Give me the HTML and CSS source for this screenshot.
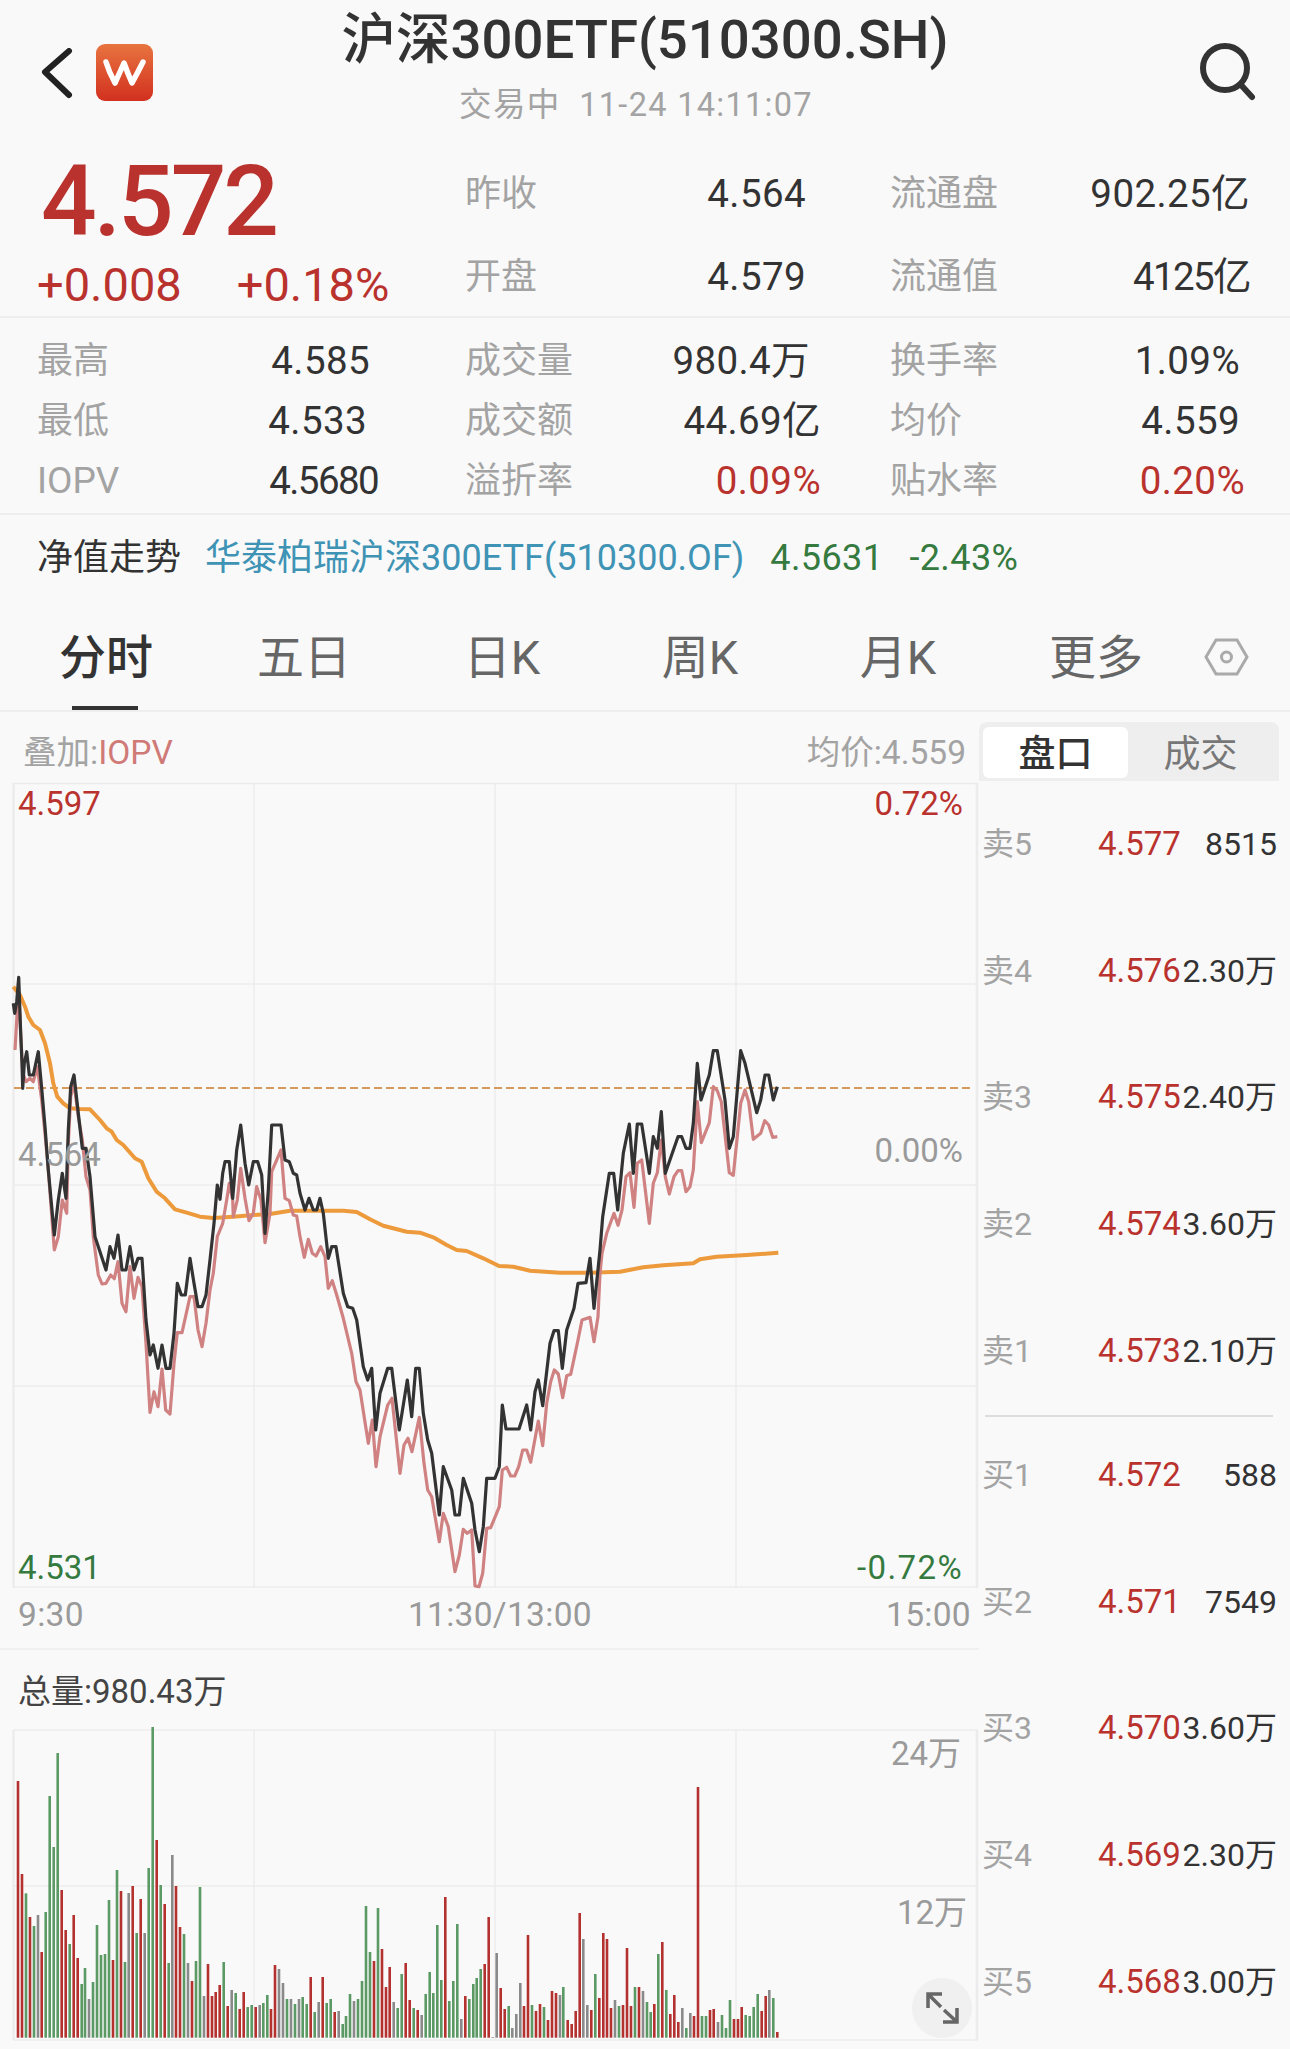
FILE: index.html
```html
<!DOCTYPE html>
<html lang="zh-CN">
<head>
    <meta charset="UTF-8">
    <title>沪深300ETF(510300.SH)</title>
    <link rel="stylesheet" href="styles.css">
</head>
<body>

<div class="header">
    <div class="header-left">
        <svg class="back-icon" width="34" height="52" viewBox="0 0 34 52"><path d="M29 3 L5 24 L29 47" /></svg>
        <svg class="logo" width="58" height="58" viewBox="0 0 58 58">
            <defs>
                <linearGradient id="logoFill" x1="0" y1="0" x2="0" y2="1">
                    <stop offset="0" stop-color="#e8743f" />
                    <stop offset="1" stop-color="#d2301f" />
                </linearGradient>
            </defs>
            <rect width="57" height="57" rx="9" fill="url(#logoFill)" />
            <path d="M10 18 Q13 28 19 39 Q24 28 28 19 Q32 30 36 39 Q42 28 47 18" fill="none" stroke="#fff" stroke-width="5.500" stroke-linecap="round" stroke-linejoin="round" />
        </svg>
    </div>
    <div class="header-center">
        <div class="title">沪深300ETF(510300.SH)</div>
        <div class="subtitle">交易中 &nbsp;11-24 14:11:07</div>
    </div>
    <svg class="search-icon" width="64" height="64" viewBox="0 0 64 64"><circle cx="29" cy="27" r="22" /><path d="M46 45 L56 56" /></svg>
</div>

<div class="quote">
    <div class="price-block">
        <div class="price red">4.572</div>
        <div class="change red"><span>+0.008</span><span>+0.18%</span></div>
    </div>
    <div class="quote-table">
        <div class="cell first"><span class="label">昨收</span><span class="val">4.564</span></div>
        <div class="cell"><span class="label">流通盘</span><span class="val">902.25亿</span></div>
        <div class="cell first"><span class="label">开盘</span><span class="val">4.579</span></div>
        <div class="cell"><span class="label">流通值</span><span class="val tight">4125亿</span></div>
    </div>
</div>

<div class="stats">
    <div class="stat"><span class="label">最高</span><span class="val nudge-8">4.585</span></div>
    <div class="stat"><span class="label">成交量</span><span class="val nudge-11">980.4万</span></div>
    <div class="stat"><span class="label">换手率</span><span class="val nudge-5">1.09%</span></div>
    <div class="stat"><span class="label">最低</span><span class="val nudge-11">4.533</span></div>
    <div class="stat"><span class="label">成交额</span><span class="val">44.69亿</span></div>
    <div class="stat"><span class="label">均价</span><span class="val nudge-5">4.559</span></div>
    <div class="stat"><span class="label latin">IOPV</span><span class="val tight">4.5680</span></div>
    <div class="stat"><span class="label">溢折率</span><span class="val red">0.09%</span></div>
    <div class="stat"><span class="label">贴水率</span><span class="val red">0.20%</span></div>
</div>

<div class="nav-row">
    <span class="nav-title">净值走势</span>
    <span class="nav-link">华泰柏瑞沪深300ETF(510300.OF)</span>
    <span class="green">4.5631</span>
    <span class="green">-2.43%</span>
</div>

<div class="tabs">
    <div class="tab active">分时</div>
    <div class="tab">五日</div>
    <div class="tab">日K</div>
    <div class="tab">周K</div>
    <div class="tab">月K</div>
    <div class="tab">更多</div>
    <svg class="hex-icon" width="46" height="40" viewBox="0 0 46 40"><path d="M2 20 L12 3 L33 3 L43 20 L33 37 L12 37 Z" /><circle cx="22.500" cy="20" r="5" /></svg>
</div>

<div class="main">
    <div class="left">
        <div class="toolbar">
            <span class="overlay">叠加:<span class="pink">IOPV</span></span>
            <span class="avg">均价:4.559</span>
        </div>
        <div class="price-chart">
            <svg id="priceChart" width="979" height="809" viewBox="0 781 979 809"></svg>
            <span class="axis red top-a left-a">4.597</span>
            <span class="axis gray top-b left-a">4.564</span>
            <span class="axis green top-c left-a">4.531</span>
            <span class="axis red top-a right-a">0.72%</span>
            <span class="axis gray top-d right-a">0.00%</span>
            <span class="axis green top-c right-a wide">-0.72%</span>
        </div>
        <div class="time-row">
            <span>9:30</span>
            <span class="time-mid">11:30/13:00</span>
            <span>15:00</span>
        </div>
        <div class="vol-title">总量:980.43万</div>
        <div class="vol-chart">
            <svg id="volChart" width="979" height="329" viewBox="0 1720 979 329"></svg>
            <span class="axis gray vol-top">24万</span>
            <span class="axis gray vol-mid">12万</span>
            <div class="expand">
                <svg width="60" height="60" viewBox="0 0 60 60"><path d="M16 30 L16 16 L30 16 M16 16 L29 29 M32 32 L45 44 M45 30 L45 44 L31 44" /></svg>
            </div>
        </div>
    </div>
    <div class="right">
        <div class="segment">
            <div class="seg-item seg-on">盘口</div>
            <div class="seg-item">成交</div>
        </div>
        <div class="book" id="book"></div>
    </div>
</div>

<script src="chart.js"></script>
</body>
</html>
```

FILE: styles.css
```css
* {
    box-sizing: border-box;
}
html, body {
    margin: 0;
    padding: 0;
}
body {
    width: 1290px;
    height: 2049px;
    overflow: hidden;
    background: #f9f9f9;
    font-family: Roboto, "Noto Sans CJK SC", sans-serif;
    color: #333;
}
.red { color: #b9322d; }
.green { color: #357a3f; }
.gray { color: #9a9a9a; }
.pink { color: #d07a78; }

/* header */
.header {
    height: 125px;
    display: grid;
    grid-template-columns: 300px 1fr 300px;
}
.header-left {
    display: flex;
    align-items: flex-start;
    padding: 44px 0 0 40px;
    gap: 22px;
}
.back-icon {
    margin-top: 4px;
}
.back-icon path {
    fill: none;
    stroke: #222;
    stroke-width: 6;
    stroke-linejoin: round;
    stroke-linecap: round;
}
.header-center {
    text-align: center;
    padding-top: 1px;
    white-space: nowrap;
}
.title {
    font-size: 54.500px;
    font-weight: 500;
    line-height: 76px;
    color: #333;
}
.subtitle {
    margin-top: 6px;
    padding-right: 18px;
    font-size: 32.500px;
    letter-spacing: 1.300px;
    line-height: 44px;
    color: #a3a3a3;
}
.search-icon {
    justify-self: end;
    margin: 41px 30px 0 0;
}
.search-icon circle, .search-icon path {
    fill: none;
    stroke: #333;
    stroke-width: 6;
    stroke-linecap: round;
}

/* quote */
.quote {
    height: 193px;
    display: flex;
    border-bottom: 2px solid #eee;
}
.price-block {
    width: 465px;
    padding: 24px 0 0 37px;
}
.price {
    font-size: 98px;
    font-weight: 500;
    letter-spacing: -3px;
    line-height: 106px;
    padding-left: 4px;
}
.change {
    display: flex;
    gap: 55px;
    font-size: 47px;
    line-height: 60px;
}
.quote-table {
    display: grid;
    grid-template-columns: 425px 360px;
    grid-auto-rows: 83px;
    padding-top: 27px;
}
.cell {
    display: flex;
    justify-content: space-between;
    align-items: center;
}
.cell.first {
    padding-right: 84px;
}
.label {
    font-size: 36px;
    line-height: 40px;
    color: #a3a3a3;
}
.label.latin {
    font-size: 37px;
}
.val {
    font-size: 38.500px;
    letter-spacing: 0.400px;
    line-height: 40px;
    color: #333;
}
.val.red {
    color: #b9322d;
}
.val.tight {
    letter-spacing: -1.600px;
}

/* stats */
.stats {
    height: 197px;
    padding: 13px 0 0 37px;
    display: grid;
    grid-template-columns: 428px 425px 355px;
    grid-auto-rows: 60px;
    border-bottom: 2px solid #eee;
}
.stat {
    display: flex;
    justify-content: space-between;
    align-items: center;
}
.stat:nth-child(3n+1) {
    padding-right: 87px;
}
.stat:nth-child(3n+2) {
    padding-right: 69px;
}
.nudge-5 { margin-right: 5px; }
.nudge-8 { margin-right: 8px; }
.nudge-11 { margin-right: 11px; }

/* net value row */
.nav-row {
    height: 86px;
    display: flex;
    align-items: center;
    padding-left: 37px;
    font-size: 36px;
    line-height: 40px;
    white-space: nowrap;
}
.nav-title {
    color: #333;
    margin-right: 24px;
}
.nav-link {
    color: #3f93b5;
    margin-right: 26px;
}
.nav-row .green {
    margin-right: 26px;
    letter-spacing: 0.400px;
}

/* tabs */
.tabs {
    height: 111px;
    display: grid;
    grid-template-columns: repeat(6, 198px) 1fr;
    padding: 27px 0 0 7px;
    border-bottom: 2px solid #eee;
    position: relative;
}
.tab {
    font-size: 47px;
    line-height: 60px;
    text-align: center;
    color: #666;
}
.tab.active {
    color: #333;
    font-weight: 500;
}
.tab.active::after {
    content: "";
    position: absolute;
    left: 72px;
    bottom: 0;
    width: 66px;
    height: 4px;
    background: #333;
}
.hex-icon {
    margin: 9px 0 0 9px;
}
.hex-icon path, .hex-icon circle {
    fill: none;
    stroke: #aaa;
    stroke-width: 3;
}

/* main */
.main {
    display: flex;
}
.left {
    width: 979px;
}
.right {
    flex: 1;
}
.toolbar {
    height: 69px;
    display: flex;
    justify-content: space-between;
    align-items: center;
    padding: 12px 13px 0 23px;
    font-size: 33.500px;
    line-height: 40px;
    color: #a3a3a3;
}
.price-chart, .vol-chart {
    position: relative;
}
.price-chart svg, .vol-chart svg {
    display: block;
}
.axis {
    position: absolute;
    font-size: 33px;
    line-height: 40px;
}
.axis.wide {
    letter-spacing: 1.400px;
}
.left-a { left: 18px; }
.right-a { right: 16px; }
.top-a { top: 3px; }
.top-b { top: 354px; }
.top-c { top: 767px; }
.top-d { top: 350px; }
.time-row {
    height: 60px;
    display: flex;
    justify-content: space-between;
    align-items: center;
    padding: 0 8px 8px 18px;
    font-size: 33.500px;
    letter-spacing: 0.300px;
    line-height: 40px;
    color: #9a9a9a;
    border-bottom: 2px solid #f0f0f0;
}
.time-mid {
    margin-left: 30px;
}
.vol-title {
    height: 70px;
    padding-left: 18px;
    font-size: 33px;
    line-height: 84px;
    color: #444;
}
.vol-top { top: 14px; right: 18px; }
.vol-mid { top: 173px; right: 12px; }
.expand {
    position: absolute;
    left: 912px;
    top: 258px;
    width: 60px;
    height: 60px;
    border-radius: 50%;
    background: #f0f0f0;
}
.expand path {
    fill: none;
    stroke: #666;
    stroke-width: 3.500;
}

/* order book */
.segment {
    height: 59px;
    margin: 10px 12px 0 0;
    padding: 5px 6px 3px 4px;
    background: #eee;
    border-radius: 8px 8px 0 0;
    display: flex;
}
.seg-item {
    width: 145px;
    font-size: 37px;
    line-height: 55px;
    text-align: center;
    color: #777;
}
.seg-on {
    height: 51px;
    background: #fff;
    border-radius: 6px;
    color: #333;
    font-weight: 500;
}
.book-row {
    height: 126.600px;
    display: flex;
    align-items: center;
    padding: 0 14px 0 3px;
    font-size: 33px;
    line-height: 40px;
}
.book-label {
    width: 116px;
    font-size: 32px;
    color: #a3a3a3;
}
.book-price {
    width: 82px;
    color: #b9322d;
}
.book-vol {
    flex: 1;
    font-size: 32px;
    text-align: right;
    white-space: nowrap;
    color: #333;
}
.book-sep {
    height: 2px;
    margin: 1px 18px -5px 6px;
    background: #ddd;
}
```

FILE: chart.js
```js
// traced from the intraday picture, every piece is in its own frame so pts() maps it to page pixels
const a = (s) => pts(0, 780, s);
const b = (s) => pts(0, 1180, s);
const c = (s) => pts(440, 1240, s);
const d = (s) => pts(480, 1000, s);

function pts(ox, oy, s) {
    return s.trim().split(/\s+/).map((p) => {
        const xy = p.split(",");
        return (ox + xy[0] / 3).toFixed(1) + "," + (oy + xy[1] / 3).toFixed(1);
    });
}

const blackLine = [].concat(
    a("40,670 44,700 50,665 56,592 62,760 66,850 68,925 73,850 80,815 88,885 100,885 115,815 125,925 135,1040 145,1170"),
    b("163,165 175,60"),
    a("187,1180 198,1255 205,1050 212,920 222,885 235,1000 247,1105 258,1105 270,1190"),
    b("285,170 318,270 330,200 342,235 354,165 366,270 378,270 390,200 402,270 414,235 426,235 438,420 450,525 460,495 474,565 486,495 498,565 510,565 522,460 532,310 544,345 556,345 570,235 582,310 594,380 606,380 618,345 630,240 642,130"),
    a("652,1215 660,1258 668,1180 675,1145 688,1145 698,1255 710,1110 722,1035 735,1150 746,1215 760,1145 773,1145 785,1185"),
    b("795,160"),
    a("805,1230 815,1035 843,1035 855,1140 868,1145 880,1180 890,1185 900,1240"),
    b("915,90 927,55 940,90 950,90 960,55 970,100 985,235 995,200 1008,200 1030,340 1043,380 1058,385 1070,420 1090,560 1103,600 1115,565 1127,750 1140,640 1163,565 1175,565 1198,750 1222,600 1235,710 1247,565 1258,565 1270,700 1283,780 1295,820 1318,1005"),
    c("10,680 35,750 45,825 58,825 70,715 95,790 105,870 118,935 130,860 140,715 165,715 178,680 187,495 198,567 237,567 260,495 272,570 285,455 295,420 308,497 330,310 342,272 355,272 367,385 380,270 402,205 414,130 438,128 450,55 462,205 480,30"),
    d("368,650 388,520 401,520 413,630 430,460 448,372 460,520 472,372 485,372 508,520 520,410 532,445 544,335 556,520 594,410 605,410 618,445 630,445 640,370 652,190 663,300 688,225 700,152 712,152 735,300 748,445 760,410 782,152 795,190 830,338 842,300 855,225 866,225 880,300 892,260")
);

const pinkLine = [].concat(
    a("45,810 52,690 56,640 62,760 68,880 78,905 90,895 100,905 112,860 125,960 135,1060 145,1170"),
    b("163,210 175,170 187,60 200,100"),
    a("205,1090 212,950 222,910 235,1010 247,1080 258,1190 270,1230"),
    b("280,170 295,285 306,312 318,310 332,285 343,296 354,245 366,370 378,395 390,260 402,355 414,292 426,320 438,490 450,697 462,635 474,680 486,567 497,690 510,702 522,550 532,458 546,458 570,350 582,350 594,450 606,500 618,430 630,330 640,280 652,170 668,130 680,60"),
    a("688,1210 698,1260"),
    b("700,110 712,60"),
    a("722,1165 735,1255"),
    b("747,122 760,100"),
    a("770,1220 783,1260"),
    b("795,188 810,100"),
    a("815,1175 843,1110"),
    b("855,55 868,62 880,105 890,108 900,170 913,232 925,178 937,220 948,228 962,200 975,230 985,325 997,302 1010,345 1030,415 1055,520 1068,605 1080,630 1105,790 1117,720 1128,860 1140,770 1163,675 1176,655 1200,880 1212,795 1224,775 1236,815 1258,712 1272,850 1283,930 1295,950 1318,1085"),
    c("10,820 25,860 45,995 58,945 70,868 82,880 95,870 105,1038 117,1040 128,1000 140,865 152,863 178,800 187,690 200,682 212,708 224,708 236,680 248,630 260,630 272,667 295,543 308,617 320,490 332,425 343,390 355,402 368,473 380,407 392,403 414,300 426,240 450,232 462,305 474,230 480,100 486,40"),
    d("380,700 402,640 414,676 426,630 438,530 450,518 462,622 472,490 485,480 508,670 520,550 532,518 544,420 556,530 568,582 582,530 594,512 605,512 618,575 630,560 640,510 652,305 664,428 688,368 700,260 712,272 724,305 748,518 760,526 782,310 795,270 806,305 820,418 842,400 854,362 866,375 878,412 892,410")
);

const avgLine = [].concat(
    a("40,620 60,645 75,680 85,710 100,735 120,750 135,790 150,850 160,910 172,950 190,970 210,985 240,987 270,988 300,1020 320,1045 335,1055 350,1080 370,1095 405,1135 425,1145"),
    b("445,-5 470,35 495,55 525,88 560,98 600,110 640,114 700,110 760,105 810,102 870,92 960,92 1030,92 1070,96 1110,118 1150,137 1220,155 1260,158 1300,172 1340,195 1370,210 1400,213 1450,235 1497,258"),
    d("100,800 150,812 240,818 330,818 420,815 490,802 550,796 640,790 660,778 710,770 800,765 895,758")
);

// x:top + colour, in 3x pixels of the two crops of the volume panel
const leftBars = "54:303r 66:582r 78:640g 90:711r 102:738g 114:705n 125:816r 137:696g 149:348g 161:501g 173:219g 185:630r 197:750r 209:792g 221:705r 233:834r 245:912g 255:864g 267:957n 279:906g 291:735g 303:825g 315:822g 327:660g 339:840r 351:570g 363:633r 375:846g 386:639n 398:618r 410:759g 422:657r 434:759n 446:564g 458:141g 470:480r 482:615g 494:672r 506:849g 517:525n 528:618r 540:741r 552:762g 564:849n 576:903r 588:843g 600:621g 612:948n 624:852r 636:948r 647:936r 659:915r 671:846g 683:978r 695:930n 707:939g 719:987r 731:936r 743:981g 755:975g 767:981r 779:975n 790:969g 802:945g 813:987r 825:855r 837:867n 849:909n 861:957g 873:957n 885:972g 897:957n 908:951g 920:972g 932:891r 944:996g 956:966n 968:891r 980:969g 992:957g 1004:996r 1016:993n 1028:1032g 1038:1008g 1050:942g 1062:963n 1074:957g 1086:903g 1098:678g 1110:816g 1122:843r 1134:684g 1146:807r 1158:921r 1169:861r 1181:966n 1193:984g 1205:882g 1217:849r 1229:960r 1241:984g 1253:990r 1265:1005n 1277:942g 1289:876g 1300:939g 1312:735g 1324:900g 1336:651r 1348:963g 1360:903g 1372:732g 1384:1017n 1396:948r 1408:957g 1420:912g 1430:894g 1442:867g 1454:852r 1466:711r 1478:1071n 1490:819n";
const rightBars = "2:924r 14:987r 26:978g 37:1044n 49:1002n 61:909n 72:978r 84:765r 96:975g 108:993r 120:972r 132:981g 144:1020r 156:933r 168:939r 180:945n 190:921g 203:1020r 215:1032r 227:993r 239:699r 250:777n 262:975n 274:990r 286:882g 298:954r 310:759r 321:777r 333:984r 345:960n 357:978g 369:975r 381:804r 393:978r 405:921g 417:921r 429:933n 441:966g 452:996g 463:972r 475:822g 487:786r 499:930g 511:1002r 523:945r 535:1026r 547:984n 559:1044g 571:999n 582:1008r 594:321r 606:1008g 618:1008g 630:990r 641:987r 654:1026n 666:1005g 678:1044g 690:960g 702:1017r 714:1017r 725:981r 737:1005g 749:1008g 761:981g 773:942g 785:993r 797:948r 808:930n 820:954g 832:1056r";

const barColors = { r: "#b3322f", g: "#5b9a64", n: "#8a8a8a" };

function gridLines(ys, top, bottom) {
    let out = "";
    ys.forEach((y) => {
        out += `<line x1="13" x2="978" y1="${y}" y2="${y}" stroke="#ececec" stroke-width="1.5"/>`;
    });
    [254, 495, 736].forEach((x) => {
        out += `<line x1="${x}" x2="${x}" y1="${top}" y2="${bottom}" stroke="#ececec" stroke-width="1.5"/>`;
    });
    [13.500, 977].forEach((x) => {
        out += `<line x1="${x}" x2="${x}" y1="${top}" y2="${bottom}" stroke="#ececec" stroke-width="2.500"/>`;
    });
    return out;
}

function polyline(points, color, width) {
    return `<polyline points="${points.join(" ")}" fill="none" stroke="${color}" stroke-width="${width}" stroke-linejoin="round"/>`;
}

function renderPriceChart() {
    document.getElementById("priceChart").innerHTML =
        gridLines([783.500, 984, 1185, 1386, 1587], 783, 1588) +
        `<line x1="14" x2="971" y1="1088" y2="1088" stroke="#d89a5c" stroke-width="1.800" stroke-dasharray="8 4"/>` +
        polyline(avgLine, "#ec9a3c", 4) +
        polyline(pinkLine, "#d08282", 3.2) +
        polyline(blackLine, "#333", 3.2);
}

function barRects(s, ox) {
    let out = "";
    s.split(" ").forEach((item) => {
        const x = parseInt(item);
        const top = parseInt(item.split(":")[1]);
        const color = barColors[item.slice(-1)];
        const y = 1680 + top / 3;
        out += `<rect x="${(ox + x / 3 - 1.3).toFixed(1)}" y="${y}" width="2.600" height="${(2037.7 - y).toFixed(1)}" fill="${color}"/>`;
    });
    return out;
}

function renderVolChart() {
    document.getElementById("volChart").innerHTML =
        gridLines([1730, 1886, 2040], 1730, 2040) +
        barRects(leftBars, 0) +
        barRects(rightBars, 500);
}

function renderBook() {
    const sells = [["卖5", "4.577", "8515"], ["卖4", "4.576", "2.30万"], ["卖3", "4.575", "2.40万"], ["卖2", "4.574", "3.60万"], ["卖1", "4.573", "2.10万"]];
    const buys = [["买1", "4.572", "588"], ["买2", "4.571", "7549"], ["买3", "4.570", "3.60万"], ["买4", "4.569", "2.30万"], ["买5", "4.568", "3.00万"]];
    const row = (r) => `<div class="book-row"><span class="book-label">${r[0]}</span><span class="book-price">${r[1]}</span><span class="book-vol">${r[2]}</span></div>`;
    document.getElementById("book").innerHTML = sells.map(row).join("") + `<div class="book-sep"></div>` + buys.map(row).join("");
}

renderPriceChart();
renderVolChart();
renderBook();
```
